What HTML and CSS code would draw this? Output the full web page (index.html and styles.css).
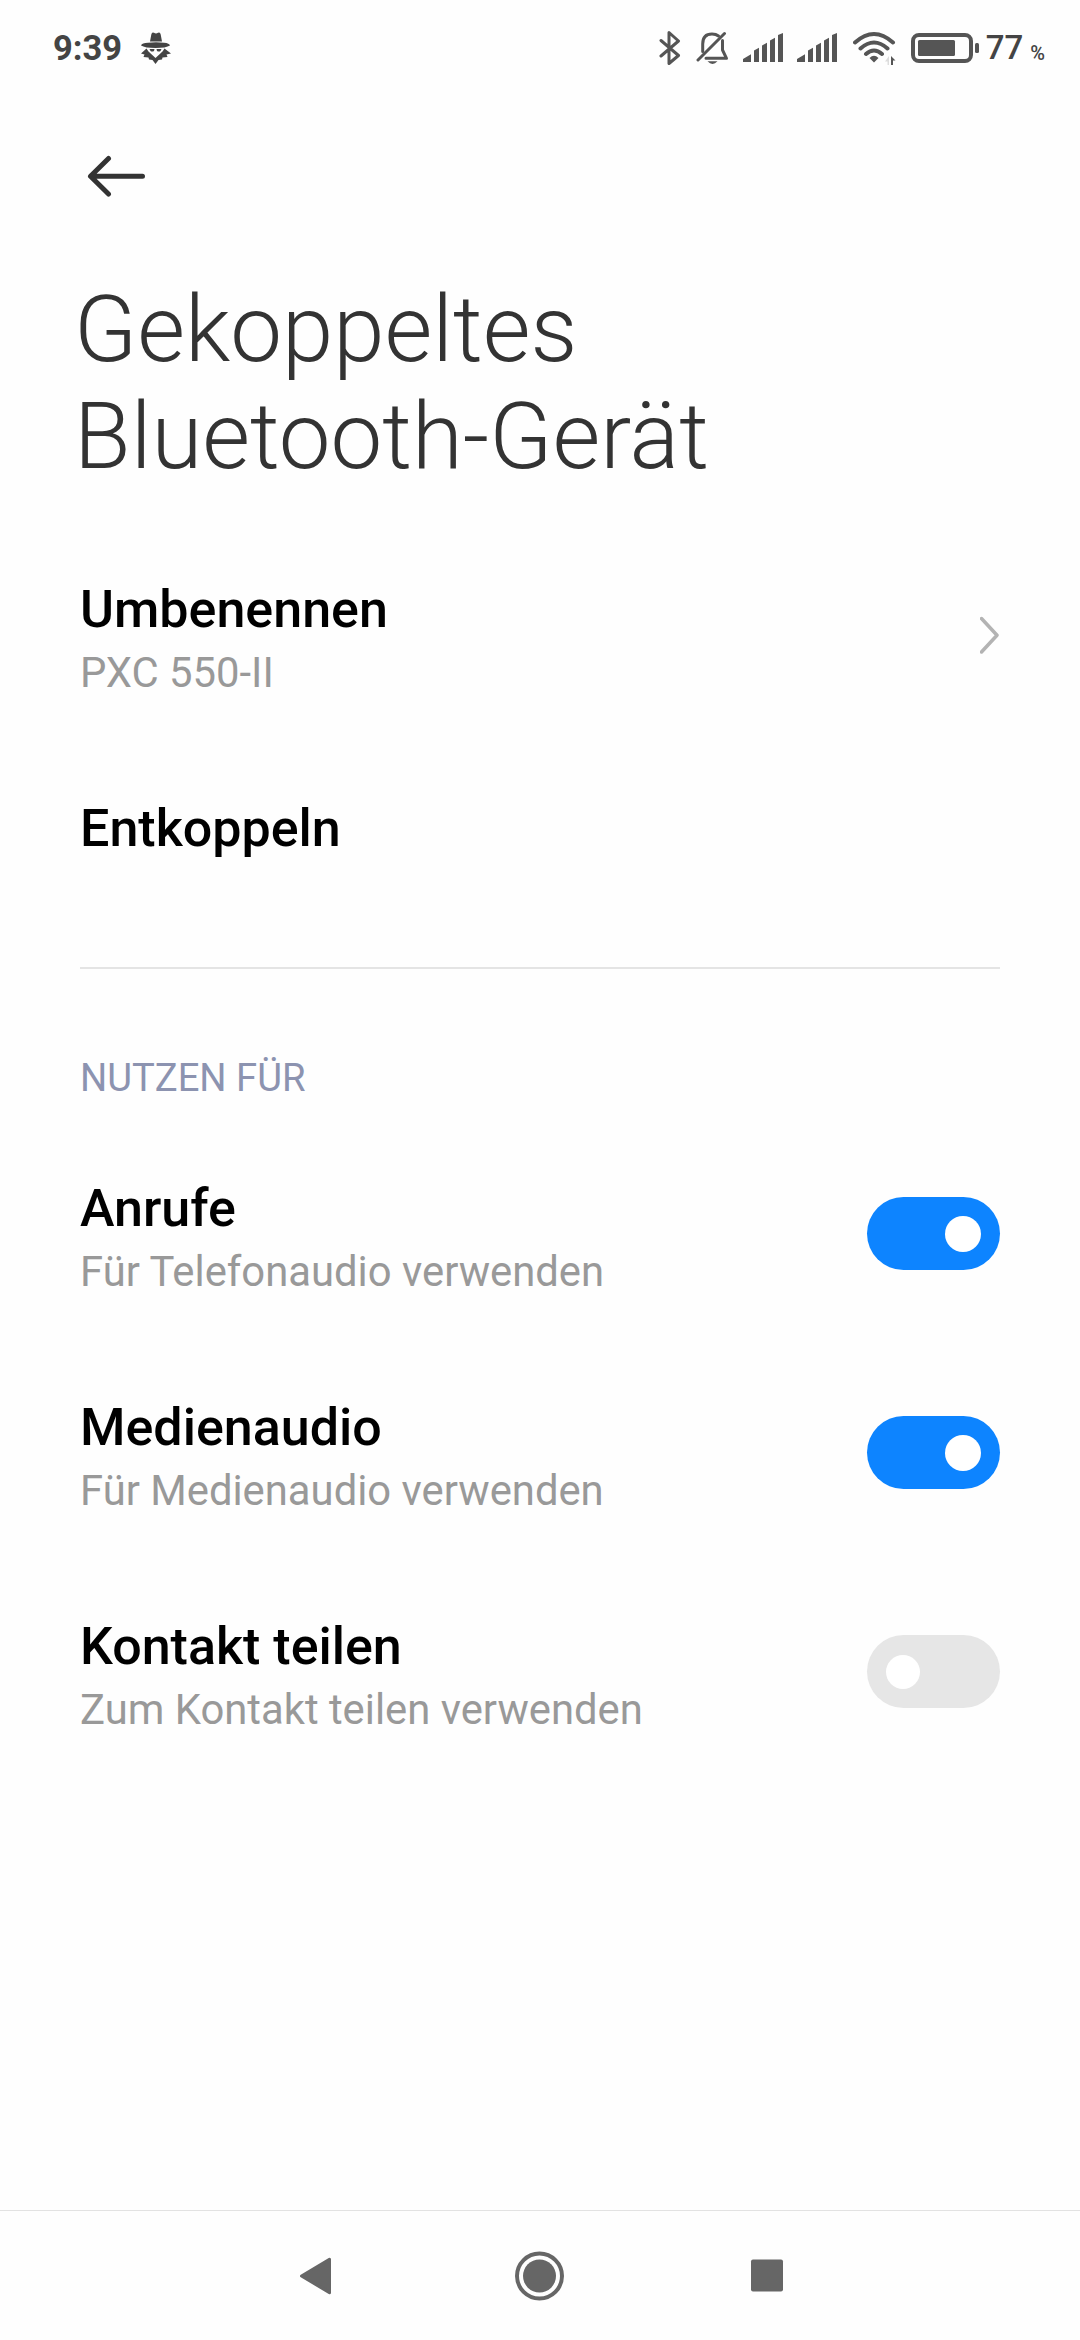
FILE: index.html
```html
<!DOCTYPE html>
<html lang="de">
<head>
    <meta charset="UTF-8">
    <meta name="viewport" content="width=device-width, initial-scale=1.0">
    <title>Gekoppeltes Bluetooth-Gerät</title>
    <link rel="stylesheet" href="styles.css">
</head>
<body>
    <!-- Statusleiste -->
    <header class="status-bar">
        <span class="clock">9:39</span>
        <svg class="icon-incognito" width="32" height="34" viewBox="0 0 32 34">
            <path d="M10 10.500 11.300 3.500Q12 .5 14 1.800Q16 3 18 1.800Q20 .5 20.700 3.500L22 10.500Z"/>
            <path d="M1 14.500Q2 12 8 11.800Q16 10.500 24 11.800Q29.500 12.300 30 14.500Q26 17 15.500 17Q5 17 1 14.500Z"/>
            <path d="M6.500 17.500 1 22.500 4.500 23.500 3.500 26 8.500 26.500 9 28.500 12.500 29 15.500 33 18.500 29 22 28.500 22.500 26.500 27.500 26 26.500 23.500 31 22.500 24.500 17.500 22.500 20.500 15.500 27 8.500 20.500Z"/>
            <path d="M9.500 18H14.500L14 20Q12 21 10.500 20ZM16.500 18H21.500L20.500 20Q19 21 17 20Z"/>
        </svg>

        <div class="status-icons">
            <svg class="icon-bt" width="22" height="36" viewBox="0 0 22 36">
                <path d="M2 10.500 19.500 25.500 10 33.500V2.500L19.500 11 2 26"/>
            </svg>
            <svg class="icon-bell" width="34" height="34" viewBox="0 0 34 34">
                <path class="line" d="M6.700 20.500V13C6.700 5.500 10.500 3 16 3Q20 3 22.500 5M26.500 9.500V19L30.500 27.300H10"/>
                <path class="line" d="M2 29 28.500 2.500"/>
                <path d="M11.500 30.300H21.500Q16.500 35.500 11.500 30.300Z"/>
            </svg>
            <svg class="icon-signal" width="40" height="30" viewBox="0 0 40 30">
                <path d="M0 26 8 21.300V29H0ZM11 17.500 16 14.800V29H11ZM19 12.500 24 9.800V29H19ZM27 7.500 32 4.800V29H27ZM35 2 40 0V29H35Z"/>
            </svg>
            <svg class="icon-signal second" width="40" height="30" viewBox="0 0 40 30">
                <path d="M0 26 8 21.300V29H0ZM11 17.500 16 14.800V29H11ZM19 12.500 24 9.800V29H19ZM27 7.500 32 4.800V29H27ZM35 2 40 0V29H35Z"/>
            </svg>
            <svg class="icon-wifi" width="44" height="34" viewBox="0 0 44 34">
                <path class="line" d="M2 11.500Q21 -5.500 40 11.500M7.500 17.500Q21 5.500 34.500 17.500M13 23Q21 16 29 23"/>
                <path d="M16.500 27Q21 22.500 25.500 27L21 31.500Z"/>
                <path class="pale" d="M36 25V34H34.500V30.500H32Z"/>
                <path d="M38 34V25L42.500 29.500H40V34Z"/>
            </svg>
            <svg class="icon-battery" width="68" height="30" viewBox="0 0 68 30">
                <rect class="line" x="2" y="2" width="58" height="26" rx="6"/>
                <rect x="7" y="7" width="37" height="16" rx="1.500"/>
                <rect x="64" y="10" width="4" height="10" rx="1.500"/>
            </svg>
            <span class="battery-level">77</span>
            <span class="battery-unit">%</span>
        </div>
    </header>

    <main class="settings">
        <button class="back-btn" aria-label="Zurück">
            <svg width="60" height="42" viewBox="0 0 60 42">
                <path d="M23.500 3.500 5.500 21.300 23.500 39M6 21.300H57.500"/>
            </svg>
        </button>

        <h1>Gekoppeltes<br>Bluetooth-Gerät</h1>

        <div class="row">
            <div class="row-text">
                <div class="row-title">Umbenennen</div>
                <div class="row-summary">PXC 550-II</div>
            </div>
            <svg class="chevron" width="20" height="38" viewBox="0 0 20 38">
                <path d="M1.500 2.500 17 19.300 1.500 36"/>
            </svg>
        </div>
        <div class="row single">
            <div class="row-text">
                <div class="row-title">Entkoppeln</div>
            </div>
        </div>

        <hr class="divider">

        <h2>NUTZEN FÜR</h2>

        <div class="row">
            <div class="row-text">
                <div class="row-title">Anrufe</div>
                <div class="row-summary">Für Telefonaudio verwenden</div>
            </div>
            <div class="switch on"><span class="knob"></span></div>
        </div>
        <div class="row">
            <div class="row-text">
                <div class="row-title">Medienaudio</div>
                <div class="row-summary">Für Medienaudio verwenden</div>
            </div>
            <div class="switch on"><span class="knob"></span></div>
        </div>
        <div class="row">
            <div class="row-text">
                <div class="row-title">Kontakt teilen</div>
                <div class="row-summary">Zum Kontakt teilen verwenden</div>
            </div>
            <div class="switch"><span class="knob"></span></div>
        </div>
    </main>

    <!-- Navigationsleiste -->
    <nav class="nav-bar">
        <svg width="50" height="50" viewBox="0 0 50 50">
            <path d="M13.500 25 41.500 8.300V41.700Z" stroke="#666" stroke-width="3" stroke-linejoin="round"/>
        </svg>
        <svg width="50" height="50" viewBox="0 0 50 50">
            <circle cx="24.500" cy="25" r="22.500" fill="none" stroke="#666" stroke-width="4"/>
            <circle cx="24.500" cy="25" r="16.500"/>
        </svg>
        <svg width="50" height="50" viewBox="0 0 50 50">
            <rect x="9" y="8.500" width="32" height="32" rx="2"/>
        </svg>
    </nav>
</body>
</html>
```
FILE: styles.css
```css
* {
    box-sizing: border-box;
}

body {
    margin: 0;
    height: 2340px;
    display: flex;
    flex-direction: column;
    background-color: #fefefe;
    color: #000;
    font-family: Roboto, "Liberation Sans", sans-serif;
    overflow: hidden;
}

/* Statusleiste */
.status-bar {
    display: flex;
    align-items: center;
    height: 96px;
    padding: 0 35px 0 53px;
    color: #444;
}

.status-bar svg {
    fill: #555;
    flex-shrink: 0;
}

.clock {
    font-size: 34.5px;
    font-weight: 700;
    line-height: 40px;
    width: 87px;
}

.status-bar .icon-incognito {
    fill: #444;
}

.status-icons {
    display: flex;
    align-items: center;
    margin-left: auto;
}

.status-icons .icon-bt,
.status-icons .line {
    fill: none;
    stroke: #555;
    stroke-width: 3;
    stroke-linecap: round;
    stroke-linejoin: round;
}

.icon-bell {
    margin-left: 15px;
}

.icon-signal {
    margin-left: 13px;
}

.icon-signal.second {
    margin-left: 14px;
}

.icon-wifi {
    margin-left: 16px;
}

.status-icons .icon-wifi .line {
    stroke-width: 4;
}

.icon-wifi .pale {
    fill: #ddd;
}

.icon-battery {
    margin-left: 14px;
}

.status-icons .icon-battery .line {
    stroke-width: 4;
}

.battery-level {
    font-size: 33px;
    font-weight: 500;
    line-height: 40px;
    margin-left: 7px;
}

.battery-unit {
    font-size: 20px;
    font-weight: 500;
    line-height: 24px;
    margin: 10px 0 0 7px;
}

/* Inhalt */
.settings {
    flex: 1;
    padding: 0 80px;
}

.back-btn {
    display: block;
    margin: 59px 0 0 5px;
    padding: 0;
    border: none;
    background: none;
    height: 42px;
}

.back-btn svg {
    display: block;
    fill: none;
    stroke: #333;
    stroke-width: 5;
    stroke-linecap: round;
    stroke-linejoin: round;
}

h1 {
    margin: 79px 0 0 -6px;
    height: 249px;
    font-size: 92.4px;
    font-weight: 300;
    line-height: 107px;
    color: #333;
}

.row {
    display: flex;
    align-items: center;
    justify-content: space-between;
    height: 219px;
}

.row.single {
    height: 167px;
}

.row-text {
    padding-top: 2px;
}

.row-title {
    font-size: 52px;
    font-weight: 500;
    line-height: 74px;
}

.row-summary {
    font-size: 41.8px;
    line-height: 52px;
    color: #999;
}

.chevron {
    fill: none;
    stroke: #b3b3b3;
    stroke-width: 3.5;
    stroke-linecap: round;
    stroke-linejoin: round;
}

.divider {
    margin: 56px 0 0;
    border: none;
    height: 2px;
    background-color: #e4e4e4;
}

h2 {
    margin: 0;
    padding-top: 79px;
    height: 155px;
    font-size: 38.2px;
    font-weight: 400;
    line-height: 60px;
    color: #8c93b0;
}

/* Schalter */
.switch {
    display: flex;
    align-items: center;
    width: 133px;
    height: 73px;
    padding: 0 19px;
    border-radius: 37px;
    background-color: #e6e6e6;
}

.switch.on {
    justify-content: flex-end;
    background-color: #0d84ff;
}

.knob {
    width: 34px;
    height: 34px;
    border-radius: 50%;
    background-color: #fff;
}

.switch.on .knob {
    width: 36px;
    height: 36px;
}

/* Navigationsleiste */
.nav-bar {
    display: flex;
    align-items: center;
    justify-content: center;
    gap: 177px;
    height: 130px;
    border-top: 1px solid #e2e2e2;
}

.nav-bar svg {
    fill: #666;
}
```
